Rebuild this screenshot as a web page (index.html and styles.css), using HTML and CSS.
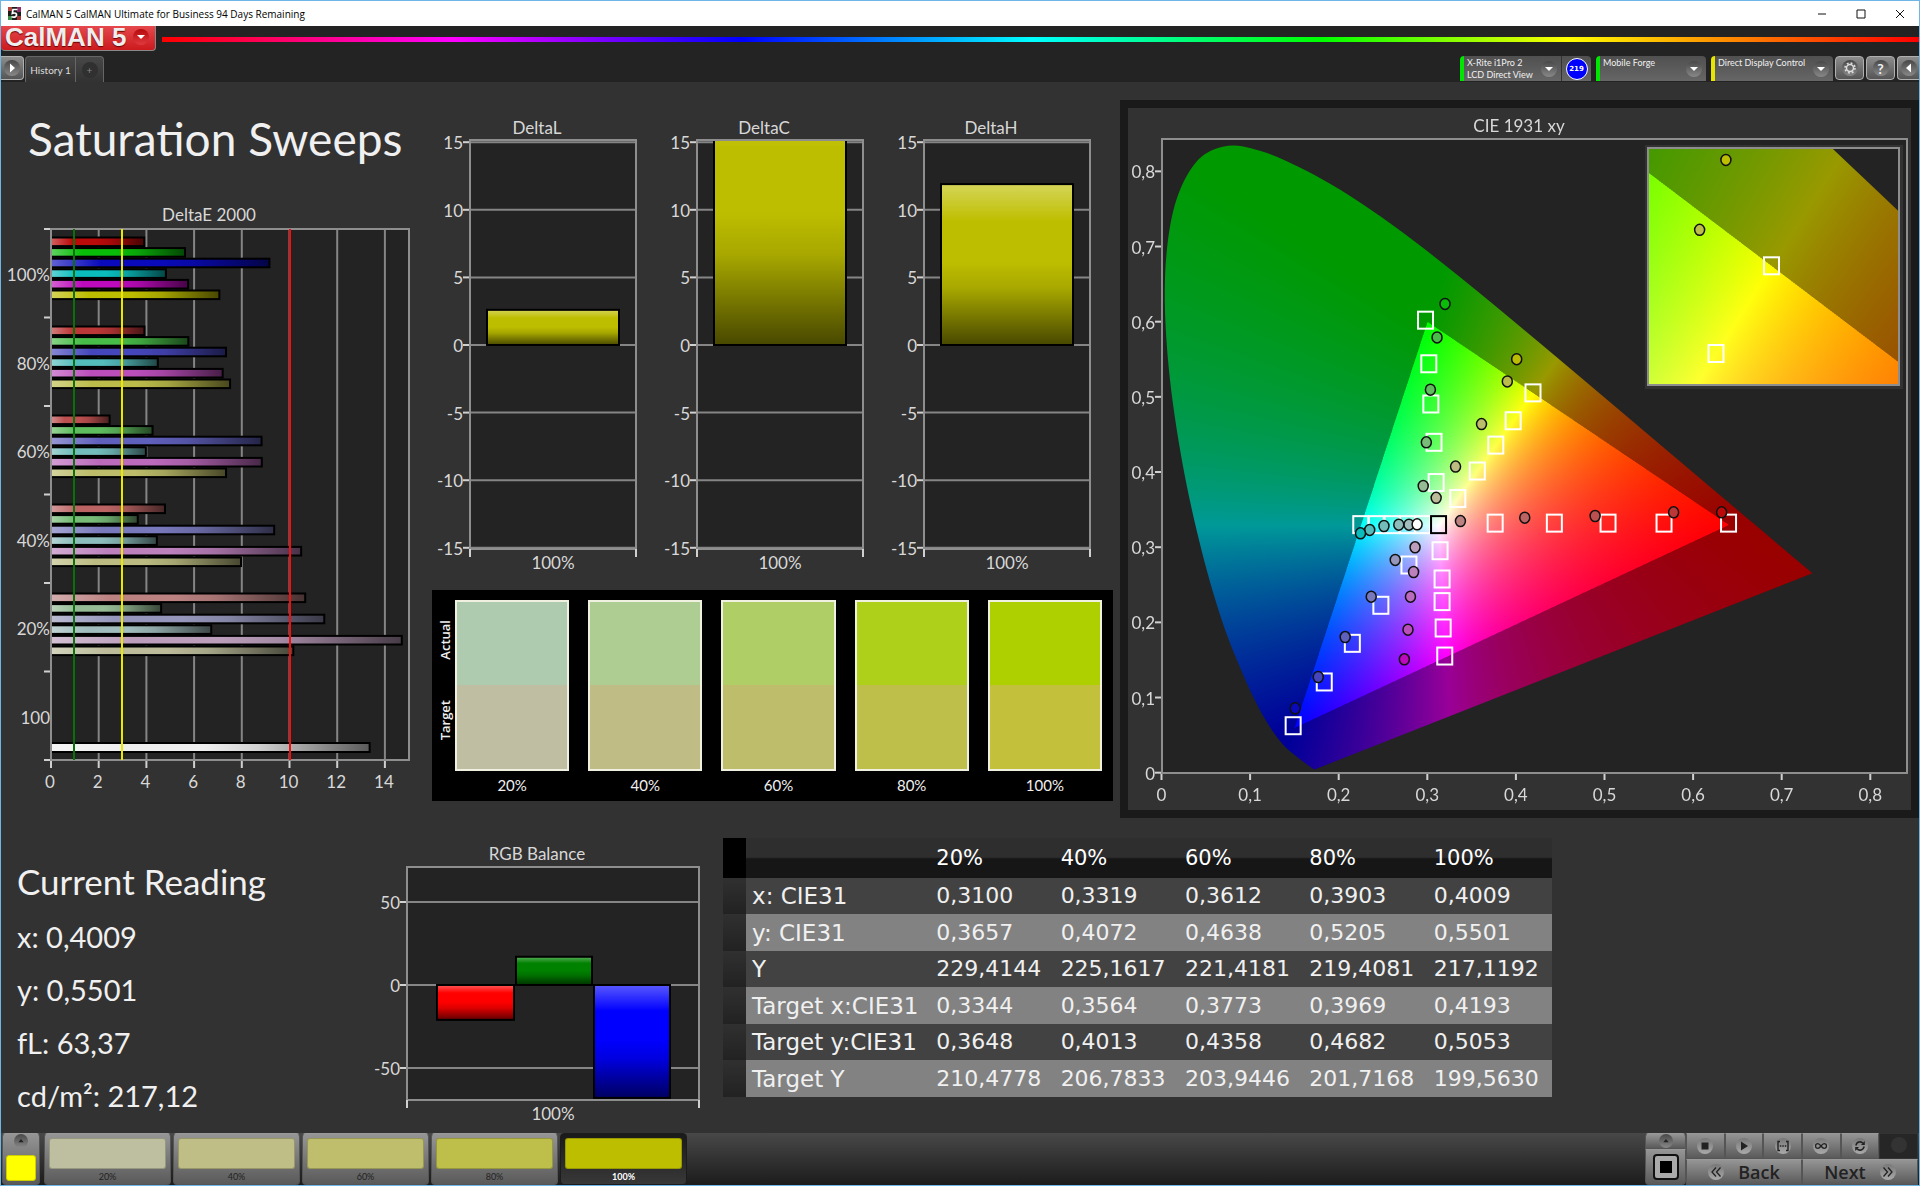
FILE: index.html
```
<!DOCTYPE html>
<html lang="en">
<head>
  <meta charset="UTF-8">
  <meta name="viewport" content="width=device-width, initial-scale=1.0">
  <title>CalMAN 5</title>
  <link rel="stylesheet" href="styles.css">
</head>
<body>
  <!-- window title bar -->
  <div class="titlebar">
    <svg class="app-icon" viewBox="0 0 13 13">
      <rect width="13" height="13" fill="#1c1c1c"/>
      <path d="M0 0h4v4H0z" fill="#b5453c"/><path d="M9 0h4v5H9z" fill="#8e2f6b"/><path d="M0 9h4v4H0z" fill="#3d8b4a"/><path d="M9 9h4v4H9z" fill="#a33"/>
      <path d="M9.5 2.500H5L4.300 6.400c3-1 4.600.2 4.200 1.900-.4 1.800-2.600 2.400-5 1.500" fill="none" stroke="#fff" stroke-width="1.700"/>
    </svg>
    <span class="window-title">CalMAN 5 CalMAN Ultimate for Business 94 Days Remaining</span>
    <div class="window-buttons">
      <button aria-label="Minimize"><svg viewBox="0 0 10 10"><path d="M1 5h8"/></svg></button>
      <button aria-label="Maximize"><svg viewBox="0 0 10 10"><path d="M1 1h8v8H1z"/></svg></button>
      <button aria-label="Close"><svg viewBox="0 0 10 10"><path d="M1 1l8 8M9 1L1 9"/></svg></button>
    </div>
  </div>

  <header>
    <div class="brand-row">
      <button class="brand">
        <span class="brand-name">CalMAN 5</span>
        <span class="knob"><svg viewBox="0 0 12 12"><path d="M2 4h8L6 8z" fill="#fff"/></svg></span>
      </button>
      <div class="rainbow"></div>
    </div>
    <div class="tool-row">
      <button class="square-button play-tab" aria-label="Show panel"><span class="knob"><svg viewBox="0 0 12 12"><path d="M4 1.500v9L9 6z" fill="#fff"/></svg></span></button>
      <nav class="tabs">
        <a href="#" class="tab">History 1</a>
        <a href="#" class="tab add" aria-label="Add"><span class="knob">+</span></a>
      </nav>
      <div class="devices">
        <div class="meter-group">
          <button class="device meter"><span class="device-name">X-Rite i1Pro 2<br>LCD Direct View</span><span class="knob"><svg viewBox="0 0 12 12"><path d="M2 4h8L6 8z" fill="#fff"/></svg></span></button>
          <button class="badge-button"><span class="badge">219</span></button>
        </div>
        <button class="device source"><span class="device-name">Mobile Forge</span><span class="knob"><svg viewBox="0 0 12 12"><path d="M2 4h8L6 8z" fill="#fff"/></svg></span></button>
        <button class="device display"><span class="device-name">Direct Display Control</span><span class="knob"><svg viewBox="0 0 12 12"><path d="M2 4h8L6 8z" fill="#fff"/></svg></span></button>
        <div class="header-buttons">
          <button class="square-button" aria-label="Settings"><span class="knob"><svg viewBox="0 0 12 12"><circle cx="6" cy="6" r="3.500" fill="none" stroke="#ddd" stroke-width="1.500"/><circle cx="6" cy="6" r="5" fill="none" stroke="#ddd" stroke-width="1.600" stroke-dasharray="1.900 2.030"/></svg></span></button>
          <button class="square-button help" aria-label="Help"><span class="knob">?</span></button>
          <button class="square-button last" aria-label="Hide panel"><span class="knob"><svg viewBox="0 0 12 12"><path d="M8 1.500v9L3 6z" fill="#fff"/></svg></span></button>
        </div>
      </div>
    </div>
  </header>

  <main>
    <div class="row top">
      <section class="sweeps">
        <h1>Saturation Sweeps</h1>
        <svg id="deltaE" class="chart" viewBox="0 0 431 600"></svg>
      </section>

      <section class="deltas">
        <div class="delta-charts">
          <svg id="deltaL" class="chart" viewBox="0 0 227 475"></svg>
          <svg id="deltaC" class="chart" viewBox="0 0 227 475"></svg>
          <svg id="deltaH" class="chart" viewBox="0 0 227 475"></svg>
        </div>
        <div class="swatches">
          <div class="side-labels"><span>Actual</span><span>Target</span></div>
          <div class="swatch-list">
            <div class="swatch"><div class="pair s20"></div><p>20%</p></div>
            <div class="swatch"><div class="pair s40"></div><p>40%</p></div>
            <div class="swatch"><div class="pair s60"></div><p>60%</p></div>
            <div class="swatch"><div class="pair s80"></div><p>80%</p></div>
            <div class="swatch"><div class="pair s100"></div><p>100%</p></div>
          </div>
        </div>
      </section>

      <section class="cie">
        <canvas id="gamut" width="1566" height="1404"></canvas>
        <svg id="cieChart" class="chart" viewBox="0 0 783 702"></svg>
      </section>
    </div>

    <div class="row bottom">
      <section class="reading">
        <h2>Current Reading</h2>
        <p>x: 0,4009</p>
        <p>y: 0,5501</p>
        <p>fL: 63,37</p>
        <p>cd/m²: 217,12</p>
      </section>

      <section>
        <svg id="rgbBalance" class="chart" viewBox="0 0 346 315"></svg>
      </section>

      <table class="data">
        <thead>
          <tr><th class="handle"></th><th class="name"></th><th>20%</th><th>40%</th><th>60%</th><th>80%</th><th>100%</th></tr>
        </thead>
        <tbody>
          <tr><td class="handle"></td><th>x: CIE31</th><td>0,3100</td><td>0,3319</td><td>0,3612</td><td>0,3903</td><td>0,4009</td></tr>
          <tr><td class="handle"></td><th>y: CIE31</th><td>0,3657</td><td>0,4072</td><td>0,4638</td><td>0,5205</td><td>0,5501</td></tr>
          <tr><td class="handle"></td><th>Y</th><td>229,4144</td><td>225,1617</td><td>221,4181</td><td>219,4081</td><td>217,1192</td></tr>
          <tr><td class="handle"></td><th>Target x:CIE31</th><td>0,3344</td><td>0,3564</td><td>0,3773</td><td>0,3969</td><td>0,4193</td></tr>
          <tr><td class="handle"></td><th>Target y:CIE31</th><td>0,3648</td><td>0,4013</td><td>0,4358</td><td>0,4682</td><td>0,5053</td></tr>
          <tr><td class="handle"></td><th>Target Y</th><td>210,4778</td><td>206,7833</td><td>203,9446</td><td>201,7168</td><td>199,5630</td></tr>
        </tbody>
      </table>
    </div>
  </main>

  <footer>
    <button class="current-color" aria-label="Current color">
      <span class="mini-knob"><svg viewBox="0 0 12 12"><path d="M2 8h8L6 3z" fill="#222"/></svg></span>
      <span class="chip"></span>
    </button>
    <div class="presets">
      <button class="preset"><span class="chip s20"></span>20%</button>
      <button class="preset"><span class="chip s40"></span>40%</button>
      <button class="preset"><span class="chip s60"></span>60%</button>
      <button class="preset"><span class="chip s80"></span>80%</button>
      <button class="preset active"><span class="chip s100"></span>100%</button>
    </div>
    <div class="pattern">
      <button class="up" aria-label="Expand"><span class="mini-knob"><svg viewBox="0 0 12 12"><path d="M2 8h8L6 3z" fill="#222"/></svg></span></button>
      <button class="window" aria-label="Pattern window"><svg viewBox="0 0 28 28"><rect x="2" y="2" width="24" height="24" rx="3" fill="#aaa" stroke="#111" stroke-width="2"/><path d="M8 8h12v12H8z" fill="#000"/></svg></button>
    </div>
    <div class="transport">
      <div class="controls">
        <button aria-label="Stop"><span class="knob"><svg viewBox="0 0 12 12"><path d="M2.500 2.500h7v7h-7z"/></svg></span></button>
        <button aria-label="Play"><span class="knob"><svg viewBox="0 0 12 12"><path d="M3 1.500v9L10 6z"/></svg></span></button>
        <button aria-label="Read series"><span class="knob"><svg viewBox="0 0 12 12"><path d="M3 1.500H1v9h2M9 1.500h2v9H9" fill="none" stroke="#222" stroke-width="1.400"/><path d="M2.800 5.300h1.500v1.500H2.800zM5.300 5.300h1.500v1.500H5.300zM7.800 5.300h1.500v1.500H7.800z"/></svg></span></button>
        <button aria-label="Continuous"><span class="knob"><svg viewBox="0 0 12 12"><path d="M6 6C4.500 4 3.700 3.700 2.800 3.700a2.300 2.300 0 0 0 0 4.600C3.700 8.300 4.500 8 6 6s2.300-2.300 3.200-2.300a2.300 2.300 0 0 1 0 4.600C8.300 8.300 7.500 8 6 6z" fill="none" stroke="#222" stroke-width="1.300"/></svg></span></button>
        <button aria-label="Refresh"><span class="knob"><svg viewBox="0 0 12 12"><path d="M2 5.500A4 4 0 0 1 9 3.300M10 6.500A4 4 0 0 1 3 8.700" fill="none" stroke="#222" stroke-width="1.600"/><path d="M10.800 1v4H7zM1.200 11V7H5z"/></svg></span></button>
        <button class="off" aria-label="Record" disabled><span class="knob"></span></button>
      </div>
      <div class="steps">
        <button><span class="knob"><svg viewBox="0 0 12 12"><path d="M6 1.500L2 6l4 4.500M10.500 1.500L6.500 6l4 4.500" fill="none" stroke="#222" stroke-width="1.300"/></svg></span>Back</button>
        <button>Next<span class="knob"><svg viewBox="0 0 12 12"><path d="M1.500 1.500l4 4.500-4 4.500M6 1.500L10 6l-4 4.500" fill="none" stroke="#222" stroke-width="1.300"/></svg></span></button>
      </div>
    </div>
  </footer>

  <script src="script.js"></script>
</body>
</html>
```

FILE: styles.css
```
* {
  box-sizing: border-box;
}
body {
  margin: 0;
  min-height: 100vh;
  display: flex;
  flex-direction: column;
  border: 1px solid #6fb6e6;
  background-color: #323232;
  color: #f0f0f0;
  font-family: Lato, Carlito, sans-serif;
}
button {
  margin: 0;
  padding: 0;
  border: none;
  font-family: inherit;
  color: inherit;
  background: none;
  cursor: pointer;
}
h1, h2, p {
  margin: 0;
  font-weight: normal;
}

/* title bar */
.titlebar {
  display: flex;
  align-items: center;
  height: 25px;
  padding-left: 7px;
  background-color: #fff;
  color: #000;
}
.app-icon {
  width: 13px;
  height: 13px;
}
.window-title {
  margin-left: 5px;
  font-family: "Open Sans", sans-serif;
  font-size: 10px;
}
.window-buttons {
  display: flex;
  margin-left: auto;
}
.window-buttons button {
  width: 39px;
  height: 24px;
}
.window-buttons svg {
  width: 10px;
  height: 10px;
  fill: none;
  stroke: #111;
}

/* header */
header {
  height: 56px;
  background-color: #232323;
}
.brand-row {
  display: flex;
  height: 30px;
}
.brand {
  display: flex;
  align-items: center;
  justify-content: space-between;
  width: 155px;
  height: 25px;
  padding: 0 6px 2px 4px;
  border: 1px solid #888;
  border-top: none;
  border-left: none;
  border-radius: 0 0 4px 4px;
  background: linear-gradient(#e5484c, #cc1a1e);
}
.brand-name {
  font: bold 26px/22px "Liberation Sans", Arial, sans-serif;
  color: #eee;
  text-shadow: 0 1px 1px #600;
}
.rainbow {
  flex: 1;
  height: 5px;
  margin: 11px 0 0 6px;
  background: linear-gradient(to right, #f00, #f0f, #00f, #0ff, #0f0 66%, #ff0 80%, #f00);
}
.knob, .mini-knob {
  display: inline-flex;
  align-items: center;
  justify-content: center;
  flex: none;
  width: 16px;
  height: 16px;
  border-radius: 50%;
  background: linear-gradient(#484848, #888);
}
.brand .knob {
  background: linear-gradient(#b5090d, #e03a3e);
}
.knob svg {
  width: 12px;
  height: 12px;
}
.tool-row {
  display: flex;
  height: 26px;
}
.square-button {
  display: flex;
  align-items: center;
  justify-content: center;
  width: 29px;
  height: 24px;
  border: 1px solid #b0b0b0;
  border-radius: 4px;
  background: linear-gradient(#8c8c8c, #555);
}
.square-button.play-tab {
  width: 23px;
  border-left: none;
  border-radius: 0 4px 4px 0;
}
.square-button.last {
  width: 22px;
  border-right: none;
  border-radius: 4px 0 0 4px;
}
.help {
  font-size: 14px;
  font-weight: bold;
}
.tabs {
  display: flex;
  margin-left: 1px;
  border: 1px solid #666;
  border-bottom: none;
  border-radius: 4px 4px 0 0;
  background: linear-gradient(#484848, #323232);
}
.tab {
  display: flex;
  align-items: center;
  justify-content: center;
  width: 49px;
  color: #ddd;
  font-size: 10px;
  text-decoration: none;
}
.tab.add {
  width: 28px;
  border-left: 1px solid #666;
}
.tab.add .knob {
  color: #888;
  background: #303030;
}
.devices {
  display: flex;
  gap: 5px;
  margin-left: auto;
}
.meter-group, .header-buttons {
  display: flex;
}
.header-buttons {
  gap: 2px;
  margin-left: -3px;
}
.device {
  display: flex;
  justify-content: space-between;
  height: 25px;
  padding: 1px 4px 0 3px;
  border-left: 4px solid #00e600;
  border-radius: 4px 4px 0 0;
  background: linear-gradient(#505050, #666);
  color: #f0f0f0;
  font-size: 9px;
  line-height: 12px;
  text-align: left;
}
.device .knob {
  align-self: center;
}
.meter {
  width: 101px;
  border-radius: 4px 0 0 0;
}
.source {
  width: 110px;
}
.display {
  width: 122px;
  border-left-color: #e6e600;
}
.badge-button {
  width: 30px;
  height: 25px;
  border-left: 1px solid #333;
  border-radius: 0 4px 0 0;
  background: linear-gradient(#505050, #666);
}
.badge {
  display: inline-block;
  width: 22px;
  height: 22px;
  border: 1px solid #fff;
  border-radius: 50%;
  background-color: #00f;
  color: #fff;
  font: bold 7px/20px "DejaVu Sans", sans-serif;
}

/* main area */
main {
  flex: 1;
  padding-top: 1px;
}
.row {
  display: grid;
  align-items: start;
}
.top {
  grid-template-columns: 431fr 688fr 799fr;
}
.bottom {
  grid-template-columns: 373fr 346fr 832fr 367fr;
}
.chart {
  display: block;
  width: 100%;
}
.chart text {
  fill: #d8d8d8;
  font-size: 17px;
}
.plot {
  fill: #232323;
}
.frame {
  fill: none;
  stroke: #8e8e8e;
  stroke-width: 2;
}
.grid {
  fill: none;
  stroke: #858585;
  stroke-width: 2;
}
.tick {
  fill: none;
  stroke: #d0d0d0;
  stroke-width: 2;
}
.bar {
  stroke: #000;
  stroke-width: 2;
}
.mark {
  fill: none;
  stroke: #fff;
  stroke-width: 2;
}
.mark.white {
  stroke: #000;
}
.dot {
  stroke: #111;
  stroke-width: 1.500;
}

.sweeps h1 {
  padding: 26px 0 32px 27px;
  font-size: 46px;
  line-height: 60px;
  white-space: nowrap;
}
.deltas {
  padding: 28px 7px 0 0;
}
.delta-charts {
  display: grid;
  grid-template-columns: repeat(3, 1fr);
}
.swatches {
  display: flex;
  height: 211px;
  margin-top: 4px;
  padding: 10px 11px 0 2px;
  background-color: #000;
}
.side-labels {
  display: flex;
  flex-direction: column;
  justify-content: space-around;
  width: 21px;
  height: 161px;
}
.side-labels span {
  align-self: center;
  writing-mode: vertical-rl;
  transform: rotate(180deg);
  font: 600 13px/20px "Open Sans", sans-serif;
}
.swatch-list {
  flex: 1;
  display: grid;
  grid-template-columns: repeat(5, 1fr);
  gap: 19px;
}
.pair {
  height: 171px;
  border: 2px solid #f0f0e0;
}
.pair.s20 { background: linear-gradient(#aecbb0 50%, #bfbea2 50%); }
.pair.s40 { background: linear-gradient(#aecd92 50%, #bfbd85 50%); }
.pair.s60 { background: linear-gradient(#afce66 50%, #bdbd6b 50%); }
.pair.s80 { background: linear-gradient(#afd01a 50%, #bebe4b 50%); }
.pair.s100 { background: linear-gradient(#aed000 50%, #c3c03c 50%); }
.swatch p {
  margin-top: 4px;
  font-size: 15px;
  line-height: 20px;
  text-align: center;
}

/* canvas and chart share one cell */
.cie {
  display: grid;
  margin-top: 17px;
  border: 8px solid #1a1a1a;
  background-color: #323232;
}
.cie > * {
  grid-area: 1 / 1;
  width: 100%;
}

.reading {
  padding: 38px 0 0 16px;
  white-space: nowrap;
}
.reading h2 {
  margin-bottom: 4px;
  font-size: 35px;
  line-height: 50px;
}
.reading p {
  font-size: 29px;
  line-height: 53px;
}

.data {
  width: auto;
  margin: 20px 0 0 3px;
  border-collapse: collapse;
  table-layout: fixed;
  font-family: "DejaVu Sans", sans-serif;
  font-size: 22px;
  line-height: 24px;
  text-align: left;
  white-space: nowrap;
}
.data th, .data td {
  height: 36px;
  padding: 0 0 0 6px;
  font-weight: normal;
}
.data tbody th {
  font-size: 23px;
}
.data thead th {
  height: 40px;
  width: 15%;
  background: linear-gradient(#2e2e2e 48%, #161616 52%);
  color: #fff;
  font-size: 21px;
}
.data .handle {
  width: 23px;
  background: linear-gradient(#303030, #222);
}
.data thead .handle {
  width: 23px;
  background: #000;
}
.data thead .name {
  width: 184px;
}
.data tbody tr {
  background-color: #424242;
}
.data tbody tr:nth-child(even) {
  height: 37px;
  background-color: #828282;
}

/* footer */
footer {
  display: flex;
  height: 52px;
  padding: 0 1px;
  background: linear-gradient(#484848, #1c1c1c);
}
footer button {
  border: 1px solid #555;
  border-top-color: #999;
  background: linear-gradient(#959595, #5a5a5a);
  color: #222;
}
.current-color {
  display: flex;
  flex-direction: column;
  align-items: center;
  justify-content: space-between;
  width: 38px;
  padding: 0 0 3px;
  border-radius: 4px;
}
.mini-knob {
  width: 14px;
  height: 14px;
}
.mini-knob svg {
  width: 8px;
  height: 8px;
}
.current-color .chip {
  width: 30px;
  height: 26px;
  border: 1px solid #cc0;
  border-radius: 3px;
  background-color: #ff0;
}
.presets {
  display: flex;
  gap: 2px;
  margin-left: 4px;
}
.preset {
  display: flex;
  flex-direction: column;
  width: 127px;
  padding: 4px 4px 0;
  border-radius: 4px;
  font-size: 9px;
  line-height: 15px;
  align-items: center;
}
.preset .chip {
  width: 100%;
  height: 31px;
  border: 1px solid rgba(0, 0, 0, 0.2);
  border-radius: 3px;
}
.chip.s20 { background-color: #bebea0; }
.chip.s40 { background-color: #bebe86; }
.chip.s60 { background-color: #bebe6c; }
.chip.s80 { background-color: #bebe4b; }
.chip.s100 { background-color: #bebe00; }
.preset.active {
  border-color: #1c1c1c;
  background: linear-gradient(#1a1a1a, #383838);
  color: #fff;
  font-weight: bold;
}
.pattern {
  display: flex;
  flex-direction: column;
  width: 41px;
  margin-left: auto;
}
.pattern .up {
  height: 16px;
  border-radius: 4px 4px 0 0;
  line-height: 0;
}
.pattern .window {
  flex: 1;
  border-radius: 0 0 4px 4px;
  line-height: 0;
}
.pattern .window svg {
  width: 28px;
  height: 28px;
}
.transport {
  width: 232px;
}
.controls {
  display: grid;
  grid-template-columns: repeat(6, 1fr);
}
.controls button {
  height: 26px;
}
.controls .knob, .steps .knob {
  background: linear-gradient(#777, #aaa);
}
.controls .knob svg {
  fill: #222;
}
.controls .off, .controls .off .knob {
  border-color: #333;
  background: #333;
}
.controls .off {
  background: #262626;
}
.steps {
  display: grid;
  grid-template-columns: 1fr 1fr;
}
.steps button {
  display: flex;
  align-items: center;
  justify-content: center;
  gap: 14px;
  height: 26px;
  font: 600 18px/22px "Open Sans", sans-serif;
}
```

FILE: script.js
```
// low channel of each colour for 20, 40, 60, 80 and 100 % saturation
var LOW = {
  red: { 20: 130, 40: 100, 60: 80, 80: 55, 100: 10 },
  green: { 20: 150, 40: 120, 60: 95, 80: 72, 100: 10 },
  blue: { 20: 150, 40: 120, 60: 95, 80: 70, 100: 10 },
  cyan: { 20: 160, 40: 140, 60: 115, 80: 85, 100: 10 },
  magenta: { 20: 158, 40: 128, 60: 106, 80: 78, 100: 10 },
  yellow: { 20: 155, 40: 130, 60: 106, 80: 75, 100: 0 }
};
var HUES = { red: '100', green: '010', blue: '001', cyan: '011', magenta: '101', yellow: '110' };

function sweepColor(hue, level) {
  return HUES[hue].split('').map(function (on) {
    return on === '1' ? 188 : LOW[hue][level];
  });
}

function rgb(c) {
  return 'rgb(' + c.map(Math.round).join(',') + ')';
}

function mix(a, b, t) {
  return a.map(function (v, i) { return v + (b[i] - v) * t; });
}

function line(cls, x1, y1, x2, y2) {
  return '<path class="' + cls + '" d="M' + x1 + ' ' + y1 + 'L' + x2 + ' ' + y2 + '"/>';
}

function text(x, y, anchor, label, cls) {
  return '<text class="' + (cls || '') + '" x="' + x + '" y="' + y + '" text-anchor="' + anchor + '">' + label + '</text>';
}

function rect(cls, x, y, w, h, extra) {
  return '<rect class="' + cls + '" x="' + x + '" y="' + y + '" width="' + w + '" height="' + h + '" ' + (extra || '') + '/>';
}

// glossy fill, light at the start and dark at the end
function gradient(id, color, vertical) {
  var dir = vertical ? 'x2="0" y2="1"' : 'x2="1" y2="0"';
  return '<linearGradient id="' + id + '" ' + dir + '>' +
    '<stop offset="0" stop-color="' + rgb(mix(color, [255, 255, 255], 0.35)) + '"/>' +
    '<stop offset=".23" stop-color="' + rgb(color) + '"/>' +
    '<stop offset=".48" stop-color="' + rgb(color) + '"/>' +
    '<stop offset=".65" stop-color="' + rgb(mix(color, [0, 0, 0], 0.12)) + '"/>' +
    '<stop offset="1" stop-color="' + rgb(mix(color, [0, 0, 0], 0.62)) + '"/></linearGradient>';
}

/* ---- DeltaE 2000 ---- */
function drawDeltaE() {
  var groups = [
    { level: 100, values: [3.95, 5.66, 9.2, 4.86, 5.79, 7.1] },
    { level: 80, values: [3.96, 5.8, 7.38, 4.52, 7.24, 7.55] },
    { level: 60, values: [2.5, 4.3, 8.87, 4.02, 8.88, 7.38] },
    { level: 40, values: [4.82, 3.68, 9.4, 4.48, 10.53, 8.01] },
    { level: 20, values: [10.7, 4.66, 11.5, 6.76, 14.75, 10.2] }
  ];
  var names = ['red', 'green', 'blue', 'cyan', 'magenta', 'yellow'];
  var left = 50, right = 408, top = 28, bottom = 559, unit = 23.85;
  var step = (bottom - top) / 6;
  var out = rect('plot', left, top, right - left, bottom - top);
  var v, i;
  for (v = 0; v <= 14; v += 2) {
    var x = left + v * unit;
    if (v) out += line('grid', x, top, x, bottom);
    out += line('tick', x, bottom, x, bottom + 8);
    out += text(x - 1, 587, 'middle', v);
  }
  for (i = 0; i <= 6; i++) {
    out += line('tick', left - 7, top + i * step, left, top + i * step);
  }
  groups.forEach(function (g, gi) {
    out += text(49, 80 + gi * step, 'end', g.level + '%');
    g.values.forEach(function (val, bi) {
      var id = 'e' + g.level + names[bi];
      out += gradient(id, sweepColor(names[bi], g.level));
      out += rect('bar', left, 36.5 + gi * 89 + bi * 10.6, val * unit - 1, 8.6, 'fill="url(#' + id + ')"');
    });
  });
  out += text(49, 523, 'end', '100');
  out += gradient('ewhite', [238, 238, 238]);
  out += rect('bar', left, 542, 13.36 * unit, 9, 'fill="url(#ewhite)"');
  out += rect('frame', left, top, right - left, bottom - top);
  // pass / warning / fail limits
  out += '<g stroke-width="2"><path stroke="#0a700a" d="M73 28V559"/><path stroke="#e8e800" d="M121 28V559"/><path stroke="#f01010" d="M289 28V559"/></g>';
  out += text(208, 20, 'middle', 'DeltaE 2000', 'title');
  document.getElementById('deltaE').innerHTML = out;
}

/* ---- vertical bar charts ---- */
function drawColumns(id, o) {
  var out = rect('plot', o.left, o.top, o.right - o.left, o.bottom - o.top);
  o.ticks.forEach(function (v) {
    var y = o.zero - v * o.unit;
    out += line('grid', o.left, y, o.right, y) + line('tick', o.left - 7, y, o.left, y);
    out += text(o.left - 7, y + 7, 'end', v);
  });
  out += '<clipPath id="clip' + id + '"><rect x="' + o.left + '" y="' + o.top + '" width="' + (o.right - o.left) + '" height="' + (o.bottom - o.top) + '"/></clipPath>';
  out += '<g clip-path="url(#clip' + id + ')">';
  o.bars.forEach(function (b, i) {
    var h = Math.abs(b.value) * o.unit;
    var y = b.value > 0 ? o.zero - h : o.zero;
    out += gradient(id + i, b.color, true);
    out += rect('bar', b.x, y, b.w, h, 'fill="url(#' + id + i + ')"');
  });
  out += '</g>';
  out += rect('frame', o.left, o.top, o.right - o.left, o.bottom - o.top);
  out += line('tick', o.left, o.bottom, o.left, o.bottom + 8) + line('tick', o.right, o.bottom, o.right, o.bottom + 8);
  out += text(o.titleX, o.titleY, 'middle', o.title, 'title');
  out += text((o.left + o.right) / 2, o.bottom + 20, 'middle', '100%');
  document.getElementById(id).innerHTML = out;
}

function drawDelta(id, title, value) {
  drawColumns(id, {
    title: title, titleX: 105, titleY: 23,
    left: 38, right: 204, top: 29, bottom: 438, zero: 234, unit: 13.52,
    ticks: [15, 10, 5, 0, -5, -10, -15],
    bars: [{ x: 55, w: 132, value: value, color: [190, 190, 0] }]
  });
}

/* ---- CIE 1931 xy ---- */
var LOCUS = [
  [.1741, .005], [.1714, .0051], [.1644, .0109], [.1566, .0177], [.144, .0297], [.1355, .0399],
  [.1241, .0578], [.1096, .0868], [.0913, .1327], [.0687, .2007], [.0454, .295], [.0235, .4127],
  [.0082, .5384], [.0039, .6548], [.0139, .7502], [.0389, .812], [.0743, .8338], [.1142, .8262],
  [.1547, .8059], [.1929, .7816], [.2296, .7543], [.2658, .7243], [.3016, .6923], [.3373, .6589],
  [.3731, .6245], [.4087, .5896], [.4441, .5547], [.4788, .5202], [.5125, .4866], [.5448, .4544],
  [.5752, .4242], [.627, .3725], [.6658, .334], [.6915, .3083], [.719, .2809], [.7347, .2653]
];

// main plot and magnified corner, both in chart units
var MAIN = { x0: 33.5, y0: 664.7, sx: 886, sy: 751.7 };
var ZOOM = { x0: 643.5 - .4193 * 2478, y0: 157.8 + .5053 * 2364, sx: 2478, sy: 2364 };

function px(view, p) {
  return [view.x0 + p[0] * view.sx, view.y0 - p[1] * view.sy];
}

function xyColor(x, y) {
  var X = x / y, Z = (1 - x - y) / y;
  var c = [
    3.2406 * X - 1.5372 - 0.4986 * Z,
    -0.9689 * X + 1.8758 + 0.0415 * Z,
    0.0557 * X - 0.204 + 1.057 * Z
  ];
  var outside = Math.min(c[0], c[1], c[2]) < 0;
  var scale = 255 / Math.max(c[0], c[1], c[2]) * (outside ? 0.6 : 1);
  return c.map(function (v) { return Math.max(0, v) * scale; });
}

function locusPath(ctx, view) {
  var p = LOCUS.map(function (q) { return px(view, q); });
  ctx.beginPath();
  ctx.moveTo(p[0][0], p[0][1]);
  for (var i = 0; i < p.length - 1; i++) {
    var a = p[i - 1] || p[i], b = p[i], c = p[i + 1], d = p[i + 2] || c;
    ctx.bezierCurveTo(b[0] + (c[0] - a[0]) / 6, b[1] + (c[1] - a[1]) / 6,
      c[0] - (d[0] - b[0]) / 6, c[1] - (d[1] - b[1]) / 6, c[0], c[1]);
  }
  ctx.closePath();
}

function paintGamut(ctx, view, box) {
  var tile = document.createElement('canvas');
  tile.width = box.w * 2;
  tile.height = box.h * 2;
  var t = tile.getContext('2d');
  var img = t.createImageData(tile.width, tile.height);
  for (var j = 0, k = 0; j < tile.height; j++) {
    var y = (view.y0 - box.y - j / 2) / view.sy;
    for (var i = 0; i < tile.width; i++, k += 4) {
      var c = xyColor((box.x + i / 2 - view.x0) / view.sx, Math.max(y, 0.001));
      img.data[k] = c[0];
      img.data[k + 1] = c[1];
      img.data[k + 2] = c[2];
      img.data[k + 3] = 255;
    }
  }
  t.putImageData(img, 0, 0);
  t.globalCompositeOperation = 'destination-in';
  t.scale(2, 2);
  t.translate(-box.x, -box.y);
  locusPath(t, view);
  t.fill();
  ctx.fillStyle = '#232323';
  ctx.fillRect(box.x, box.y, box.w, box.h);
  ctx.drawImage(tile, box.x, box.y, box.w, box.h);
}

var TARGETS = [
  [.298, .602], [.3017, .544], [.304, .4905], [.3076, .4395], [.31, .386],
  [.3344, .3648], [.3564, .4013], [.3773, .4358], [.3969, .4682], [.4193, .5053],
  [.2249, .33], [.2424, .33], [.2602, .33], [.2776, .33], [.295, .33],
  [.3766, .332], [.4434, .332], [.504, .332], [.5672, .332], [.64, .332],
  [.3144, .2953], [.3167, .2577], [.3167, .2276], [.3179, .1925], [.3197, .1552],
  [.2793, .2763], [.2476, .2227], [.2154, .1721], [.1837, .1207], [.1486, .0625]
];

// measured points, from 20 % up to 100 %
var MEASURED = {
  green: [[.2954, .3814], [.2989, .4395], [.3035, .5095], [.311, .5791], [.32, .6236]],
  yellow: [[.31, .3657], [.3319, .4072], [.3612, .4638], [.3903, .5205], [.4009, .5501]],
  cyan: [[.2793, .33], [.2678, .33], [.2511, .3282], [.235, .3229], [.2246, .3185]],
  red: [[.3374, .3348], [.41, .3393], [.4894, .3415], [.578, .3464], [.6322, .3464]],
  magenta: [[.2862, .2999], [.2845, .267], [.281, .2341], [.2782, .1903], [.2741, .1509]],
  blue: [[.2638, .283], [.2367, .2341], [.2073, .1805], [.1769, .1273], [.1509, .0857]]
};

function square(view, p, cls) {
  var q = px(view, p);
  return rect('mark ' + (cls || ''), q[0] - 7.5, q[1] - 8.5, 15, 17);
}

function dot(view, p, fill) {
  var q = px(view, p);
  return '<ellipse class="dot" cx="' + q[0] + '" cy="' + q[1] + '" rx="5" ry="5.500" fill="' + fill + '"/>';
}

function drawCie() {
  var ctx = document.getElementById('gamut').getContext('2d');
  ctx.scale(2, 2);
  paintGamut(ctx, MAIN, { x: 34, y: 31, w: 745, h: 634 });
  ctx.fillStyle = '#323232';
  ctx.fillRect(517, 37, 258, 244);
  paintGamut(ctx, ZOOM, { x: 520, y: 40, w: 251, h: 237 });

  var out = '', i, v;
  for (i = 0; i <= 8; i++) {
    v = i ? '0,' + i : '0';
    var p = px(MAIN, [i / 10, i / 10]);
    out += line('tick', p[0], 665, p[0], 672) + text(p[0], 693, 'middle', v);
    out += line('tick', 27, p[1], 34, p[1]) + text(27, p[1] + 7, 'end', v);
  }
  out += rect('frame', 34, 31, 745, 634) + rect('frame', 520, 40, 251, 237);
  TARGETS.forEach(function (t) { out += square(MAIN, t); });
  out += square(MAIN, [.3127, .33], 'white');
  Object.keys(MEASURED).forEach(function (hue) {
    MEASURED[hue].forEach(function (m, n) {
      out += dot(MAIN, m, rgb(sweepColor(hue, (n + 1) * 20)));
    });
  });
  out += dot(MAIN, [.2885, .3304], '#fff');
  out += square(ZOOM, [.4193, .5053]) + square(ZOOM, [.3969, .4682]);
  out += dot(ZOOM, [.3903, .5205], '#bebe4b') + dot(ZOOM, [.4009, .5501], '#bebe00');
  out += text(391, 24, 'middle', 'CIE 1931 xy', 'title');
  document.getElementById('cieChart').innerHTML = out;
}

drawDeltaE();
drawDelta('deltaL', 'DeltaL', 2.6);
drawDelta('deltaC', 'DeltaC', 19);
drawDelta('deltaH', 'DeltaH', 11.9);
drawColumns('rgbBalance', {
  title: 'RGB Balance', titleX: 163, titleY: 42,
  left: 33, right: 325, top: 49, bottom: 282, zero: 167, unit: 1.66,
  ticks: [50, 0, -50],
  bars: [
    { x: 63, w: 77, value: -21, color: [255, 0, 0] },
    { x: 142, w: 76, value: 17, color: [0, 130, 0] },
    { x: 220, w: 76, value: -68, color: [0, 0, 255] }
  ]
});
drawCie();
```
